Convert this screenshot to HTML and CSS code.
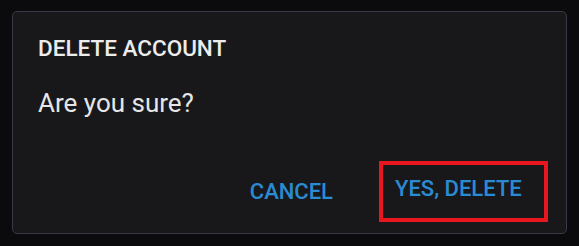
FILE: index.html
```html
<!DOCTYPE html>
<html lang="en">
<head>
    <meta charset="UTF-8">
    <meta name="viewport" content="width=device-width, initial-scale=1.0">
    <title>Delete account</title>
    <link rel="stylesheet" href="styles.css">
</head>
<body>
    <div class="dialog">
        <h2 class="dialog-title">DELETE ACCOUNT</h2>
        <p class="dialog-text">Are you sure?</p>
        <div class="dialog-actions">
            <button class="dialog-button cancel-button">CANCEL</button>
            <button class="dialog-button confirm-button">YES, DELETE</button>
        </div>
    </div>
</body>
</html>
```

FILE: styles.css
```css
body {
    font-family: Roboto, "Liberation Sans", sans-serif;
    background-color: #0b0b0d;
    margin: 0;
    padding: 11px 12px;
}

.dialog {
    width: 555px;
    height: 223px;
    box-sizing: border-box;
    background-color: #18181b;
    border: 1px solid #373b47;
    border-radius: 5px;
    padding: 24px 18px 11px 25px;
    display: flex;
    flex-direction: column;
}

.dialog-title {
    font-size: 22.5px;
    line-height: 24px;
    font-weight: 500;
    color: #ececec;
    margin: 0;
}

.dialog-text {
    font-size: 26px;
    line-height: 28px;
    color: #e6e6e6;
    margin: 29px 0 0 0;
}

.dialog-actions {
    margin-top: auto;
    display: flex;
    justify-content: flex-end;
    align-items: center;
}

.dialog-button {
    font-family: inherit;
    font-size: 22px;
    line-height: 24px;
    font-weight: 500;
    color: #2b8bd2;
    background: none;
    border: none;
    padding: 0;
    cursor: pointer;
    white-space: nowrap;
}

.cancel-button {
    margin-right: 46px;
}

/* 赤枠 */
.confirm-button {
    width: 169px;
    box-sizing: border-box;
    text-align: left;
    border: 4px solid #e8171f;
    padding: 12px 12px 17px 12px;
}
```
